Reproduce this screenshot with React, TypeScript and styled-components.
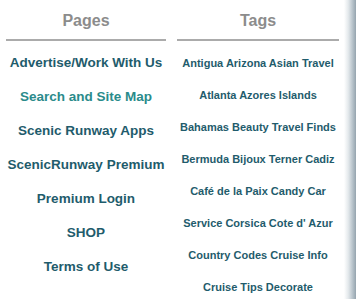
import styled, { createGlobalStyle } from 'styled-components'

const GlobalStyle = createGlobalStyle`
  html, body {
    margin: 0;
    padding: 0;
    background: #ffffff;
  }
  body {
    font-family: "Liberation Sans", Arial, sans-serif;
  }
`

const Frame = styled.div`
  width: 356px;
  height: 299px;
  display: flex;
  overflow: hidden;
  background: #ffffff;
`

const Columns = styled.div`
  flex: 1;
  display: grid;
  grid-template-columns: 172px 172px;
`

const EdgeShade = styled.div`
  width: 12px;
  background: linear-gradient(90deg, #ffffff 0%, #e4e9ec 35%, #b3bfc7 75%, #95a4ae 100%);
`

const Column = styled.section<{ $pad: number }>`
  padding: 0 ${p => p.$pad}px;
  display: flex;
  flex-direction: column;
`

const Heading = styled.h3`
  margin: 0;
  height: 39px;
  line-height: 41px;
  text-align: center;
  font-size: 16px;
  font-weight: bold;
  color: #8c8c8c;
  border-bottom: 2px solid #ababab;
`

const LinkList = styled.ul<{ $row: number }>`
  list-style: none;
  margin: 0;
  padding: ${p => (p.$row === 34 ? 5 : 6)}px 0 0;
  display: flex;
  flex-direction: column;
`

const Item = styled.li<{ $row: number; $size: number }>`
  height: ${p => p.$row}px;
  line-height: ${p => p.$row}px;
  text-align: center;
  white-space: nowrap;
  font-size: ${p => p.$size}px;
  font-weight: bold;
`

const NavLink = styled.a<{ $visited?: boolean }>`
  color: ${p => (p.$visited ? '#2a8b8b' : '#1f5c6c')};
  text-decoration: none;
`

const pages = [
  'Advertise/Work With Us',
  'Search and Site Map',
  'Scenic Runway Apps',
  'ScenicRunway Premium',
  'Premium Login',
  'SHOP',
  'Terms of Use',
]

const tags = [
  'Antigua Arizona Asian Travel',
  'Atlanta Azores Islands',
  'Bahamas Beauty Travel Finds',
  'Bermuda Bijoux Terner Cadiz',
  'Café de la Paix Candy Car',
  'Service Corsica Cote d\' Azur',
  'Country Codes Cruise Info',
  'Cruise Tips Decorate',
]

export default function App() {
  return (
    <>
      <GlobalStyle />
      <Frame>
        <Columns>
          <Column $pad={6}>
            <Heading>Pages</Heading>
            <LinkList $row={34}>
              {pages.map(p => (
                <Item key={p} $row={34} $size={13.5}>
                  <NavLink href="#" $visited={p === 'Search and Site Map'}>{p}</NavLink>
                </Item>
              ))}
            </LinkList>
          </Column>
          <Column $pad={5}>
            <Heading>Tags</Heading>
            <LinkList $row={32}>
              {tags.map(t => (
                <Item key={t} $row={32} $size={11}>
                  <NavLink href="#">{t}</NavLink>
                </Item>
              ))}
            </LinkList>
          </Column>
        </Columns>
        <EdgeShade />
      </Frame>
    </>
  )
}
